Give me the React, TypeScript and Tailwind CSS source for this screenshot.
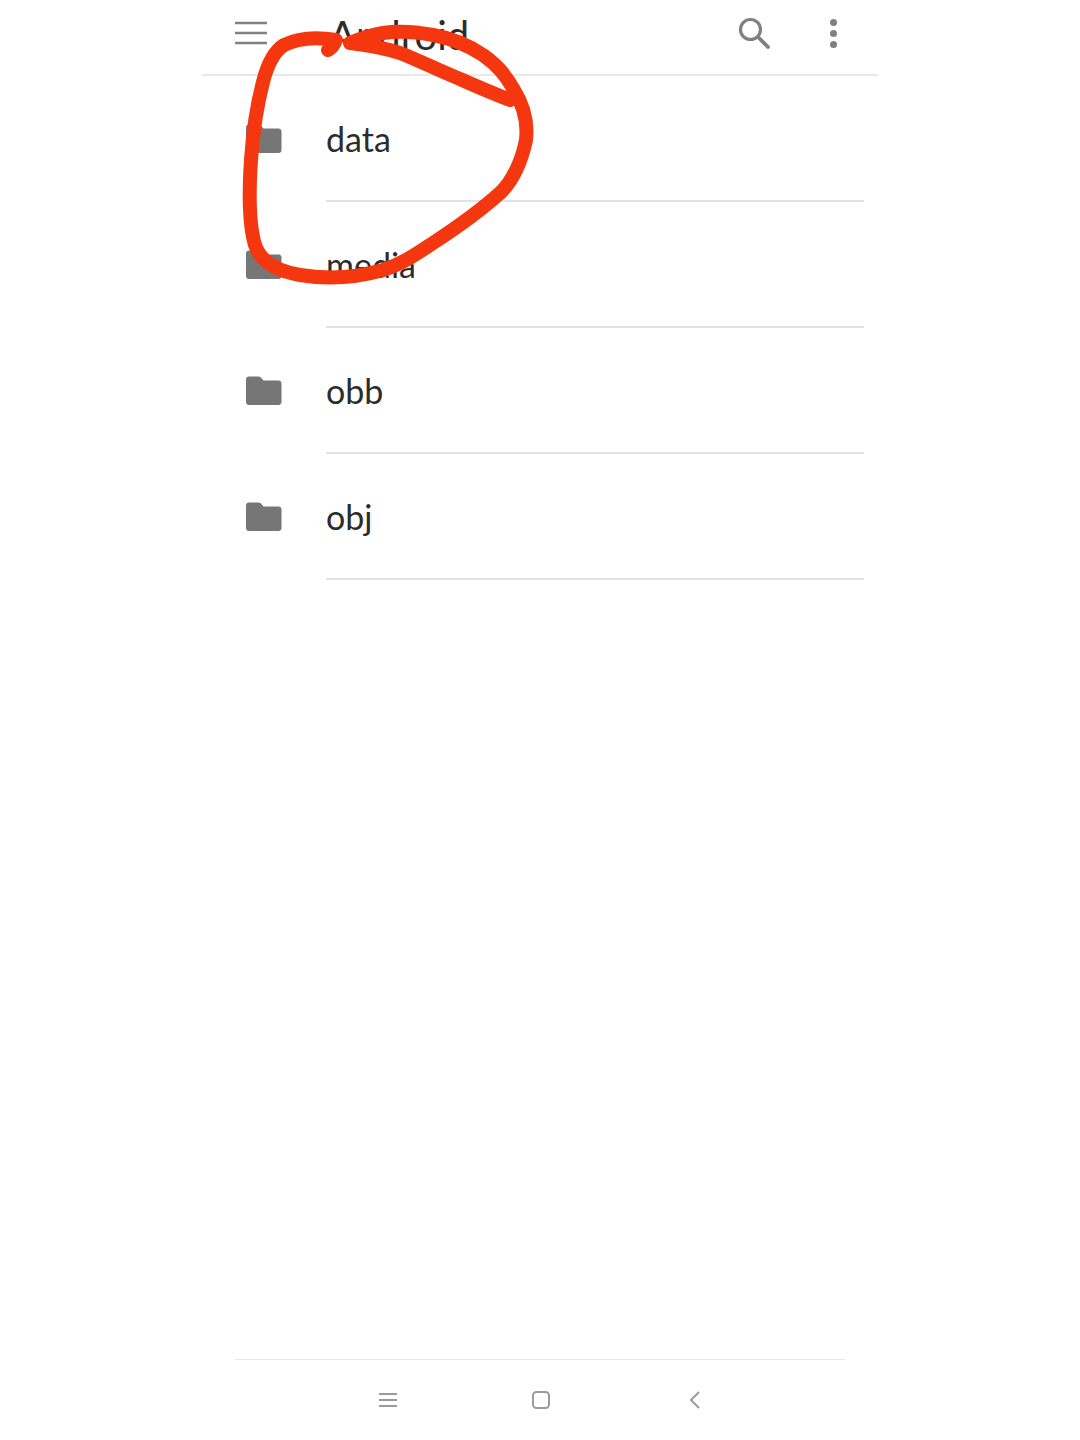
const folders = ["data", "media", "obb", "obj"];

function FolderIcon() {
  return (
    <svg width="36" height="30" viewBox="0 0 36 30" className="shrink-0">
      <path
        d="M3 0.5h9.5c1 0 1.8.4 2.4 1.1l2.6 2.9h15c1.700 0 3 1.300 3 3v18.500c0 1.700-1.300 3-3 3H3c-1.700 0-3-1.300-3-3V3.500c0-1.700 1.300-3 3-3z"
        fill="#767676"
      />
    </svg>
  );
}

function Scribble() {
  return (
    <svg
      width="1080"
      height="1440"
      viewBox="0 0 1080 1440"
      className="absolute left-0 top-0"
    >
      <path
        d="M328 50 C332 48 334 45 336 40 C318 37 298 38 284 45 C273 52 267 66 263 82 C257 105 253 130 251 160 C249 190 249 225 255 245 C261 262 276 271 300 275 C325 279 355 278 383 270 C402 264 418 253 433 243 C456 228 480 211 500 193 C513 181 522 160 526 140 C528 122 524 106 514 90 C505 74 497 65 483 55 C468 45 450 38 433 35 C412 31 395 31 383 33 C372 35 362 38 350 43 C368 45 384 48 400 53 C418 60 440 71 460 79 C478 87 492 93 510 100"
        fill="none"
        stroke="#f5370f"
        strokeWidth="14"
        strokeLinecap="round"
        strokeLinejoin="round"
      />
    </svg>
  );
}

export default function App() {
  return (
    <div className="relative flex h-[1440px] w-[1080px] flex-col overflow-hidden bg-white font-['Lato',sans-serif] text-[#2c2c2c]">
      <header className="mx-auto flex h-[76px] w-[676px] shrink-0 items-center border-b-2 border-[#e9e9e9] pb-[8px] pl-[33px]">
        <svg width="32" height="24" viewBox="0 0 32 24" className="shrink-0">
          <path d="M0 2h32M0 12h32M0 22h32" stroke="#808080" strokeWidth="2.500" />
        </svg>
        <h1 className="ml-[62px] pt-[3px] text-[40px] leading-none">Android</h1>
        <svg width="32" height="32" viewBox="0 0 32 32" className="ml-auto mr-[60px] shrink-0">
          <circle cx="12.500" cy="12.500" r="10" fill="none" stroke="#808080" strokeWidth="3.200" />
          <path d="M20 20L30 30" stroke="#808080" strokeWidth="3.800" strokeLinecap="round" />
        </svg>
        <div className="mr-[41px] flex flex-col gap-[4px]">
          <span className="size-[7px] rounded-full bg-[#808080]" />
          <span className="size-[7px] rounded-full bg-[#808080]" />
          <span className="size-[7px] rounded-full bg-[#808080]" />
        </div>
      </header>

      <ul className="mx-auto w-[676px]">
        {folders.map((name) => (
          <li key={name} className="flex h-[126px] items-stretch pl-[44px] pr-[14px]">
            <div className="flex w-[80px] shrink-0 items-center">
              <FolderIcon />
            </div>
            <div className="flex flex-1 items-center border-b-2 border-[#e2e2e2] pt-[2px] text-[34px] leading-none">
              {name}
            </div>
          </li>
        ))}
      </ul>

      <nav className="mx-auto mt-auto flex h-[81px] w-[610px] items-center border-t border-[#e9e9e9] pl-[144px]">
        <svg width="18" height="16" viewBox="0 0 18 16" className="shrink-0">
          <path d="M0 2h18M0 8h18M0 14h18" stroke="#9a9a9a" strokeWidth="2" />
        </svg>
        <svg width="18" height="18" viewBox="0 0 18 18" className="ml-[135px] shrink-0">
          <rect x="1" y="1" width="16" height="16" rx="3.500" fill="none" stroke="#9a9a9a" strokeWidth="2" />
        </svg>
        <svg width="12" height="20" viewBox="0 0 12 20" className="ml-[139px] shrink-0">
          <path d="M10 2L2 10l8 8" fill="none" stroke="#9a9a9a" strokeWidth="2" />
        </svg>
      </nav>

      <Scribble />
    </div>
  );
}
